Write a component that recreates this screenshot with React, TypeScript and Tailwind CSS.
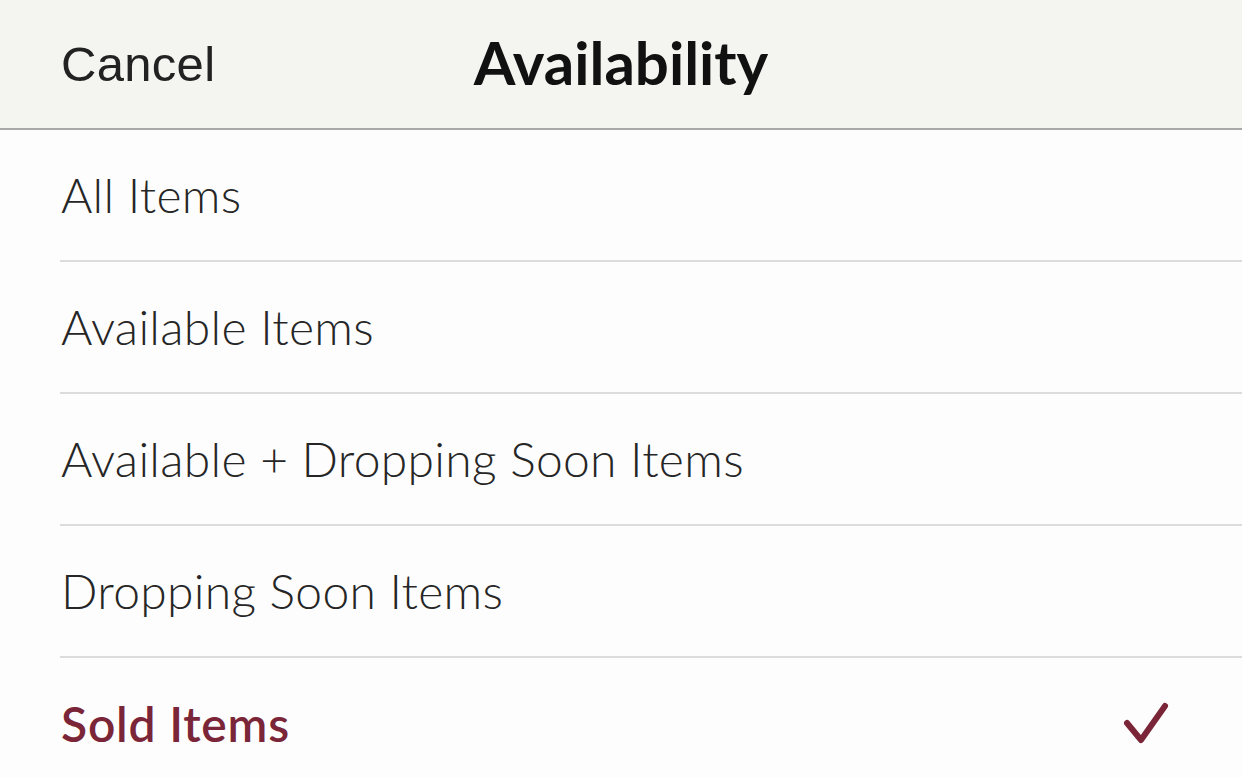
const options = [
  "All Items",
  "Available Items",
  "Available + Dropping Soon Items",
  "Dropping Soon Items",
  "Sold Items",
]

const selected = "Sold Items"

export default function App() {
  return (
    <div className="w-[1242px] h-[777px] overflow-hidden bg-[#fdfdfd]">
      <header className="relative h-[130px] bg-[#f4f4f0] border-b-2 border-[#a8a8a8] flex items-center">
        <span className="pl-[61px] text-[49px] tracking-[0.3px] text-[#222] font-['Liberation_Sans',sans-serif] pt-[1px]">
          Cancel
        </span>
        <h1 className="absolute left-0 right-0 text-center text-[60px] font-bold text-[#111] font-['Lato',sans-serif] pb-[4px] pointer-events-none">
          Availability
        </h1>
      </header>

      <ul className="pl-[60px]">
        {options.map((opt, i) => {
          const active = opt === selected
          return (
            <li
              key={opt}
              className={`h-[132px] flex items-center justify-between pr-[72px] ${
                i < options.length - 1 ? "border-b-2 border-[#dcdcdc]" : ""
              }`}
            >
              <span
                className={`text-[48px] tracking-[0.3px] font-['Lato',sans-serif] pl-[1px] ${
                  active ? "text-[#7b2638] font-semibold tracking-[0.8px]" : "text-[#262626] font-light"
                }`}
              >
                {opt}
              </span>
              {active && (
                <svg width="48" height="44" viewBox="0 0 48 44" fill="none">
                  <path
                    d="M5 21 L19 38 L43 4"
                    stroke="#7b2638"
                    strokeWidth="6"
                    strokeLinecap="round"
                    strokeLinejoin="round"
                  />
                </svg>
              )}
            </li>
          )
        })}
      </ul>
    </div>
  )
}
